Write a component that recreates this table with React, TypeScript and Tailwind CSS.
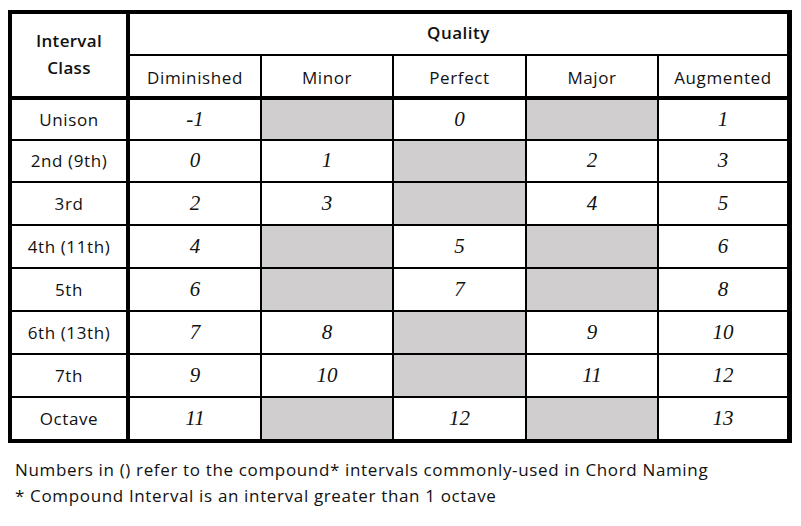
import React from "react";

const cols = [
  { name: "Diminished", w: "w-[132px] border-r-2" },
  { name: "Minor", w: "w-[132px] border-r-2" },
  { name: "Perfect", w: "w-[133px] border-r-2" },
  { name: "Major", w: "w-[132px] border-r-2" },
  { name: "Augmented", w: "w-[128px]" },
];

type Row = { label: string; h: string; vals: (string | null)[] };

const rows: Row[] = [
  { label: "Unison", h: "h-[41px]", vals: ["-1", null, "0", null, "1"] },
  { label: "2nd (9th)", h: "h-[42px]", vals: ["0", "1", null, "2", "3"] },
  { label: "3rd", h: "h-[43px]", vals: ["2", "3", null, "4", "5"] },
  { label: "4th (11th)", h: "h-[43px]", vals: ["4", null, "5", null, "6"] },
  { label: "5th", h: "h-[43px]", vals: ["6", null, "7", null, "8"] },
  { label: "6th (13th)", h: "h-[43px]", vals: ["7", "8", null, "9", "10"] },
  { label: "7th", h: "h-[43px]", vals: ["9", "10", null, "11", "12"] },
  { label: "Octave", h: "h-[41px]", vals: ["11", null, "12", null, "13"] },
];

const sans = "font-['Open_Sans','Lato',sans-serif]";
const serif = "font-['Liberation_Serif',serif]";

export default function App() {
  return (
    <div className={`w-[801px] h-[526px] bg-white text-[#111] ${sans}`}>
      <div className="pt-[10px] pl-[8px]">
        <div className="w-[784px] border-t-4 border-l-4 border-r-[5px] border-b-4 border-black">
          {/* Header */}
          <div className="flex border-b-4 border-black">
            <div className="w-[118px] border-r-4 border-black flex items-center justify-center text-center font-semibold text-[17px] tracking-[0.3px] leading-[27px] pb-[3px]">
              Interval
              <br />
              Class
            </div>
            <div className="flex-1 flex flex-col">
              <div className="h-[42px] border-b-2 border-black flex items-center justify-center font-semibold text-[17px] tracking-[0.5px] pb-[2px]">
                Quality
              </div>
              <div className="h-[40px] flex">
                {cols.map((c) => (
                  <div
                    key={c.name}
                    className={`${c.w} border-black flex items-center justify-center text-[17px] tracking-[0.6px] pt-[4px]`}
                  >
                    {c.name}
                  </div>
                ))}
              </div>
            </div>
          </div>
          {/* Body */}
          {rows.map((r, i) => (
            <div
              key={r.label}
              className={`flex ${r.h} ${i < rows.length - 1 ? "border-b-2" : ""} border-black`}
            >
              <div className="w-[118px] border-r-4 border-black flex items-center justify-center text-[17px] tracking-[0.6px]">
                {r.label}
              </div>
              {r.vals.map((v, j) => (
                <div
                  key={j}
                  className={`${cols[j].w} border-black flex items-center justify-center ${
                    v === null ? "bg-[#d0cece]" : ""
                  }`}
                >
                  {v !== null && (
                    <span className={`${serif} italic text-[21px]`}>{v}</span>
                  )}
                </div>
              ))}
            </div>
          ))}
        </div>
        <div className="pl-[7px] pt-[14px] text-[17px] tracking-[0.65px] leading-[26px]">
          <div>
            Numbers in () refer to the compound* intervals commonly-used in
            Chord Naming
          </div>
          <div>* Compound Interval is an interval greater than 1 octave</div>
        </div>
      </div>
    </div>
  );
}
